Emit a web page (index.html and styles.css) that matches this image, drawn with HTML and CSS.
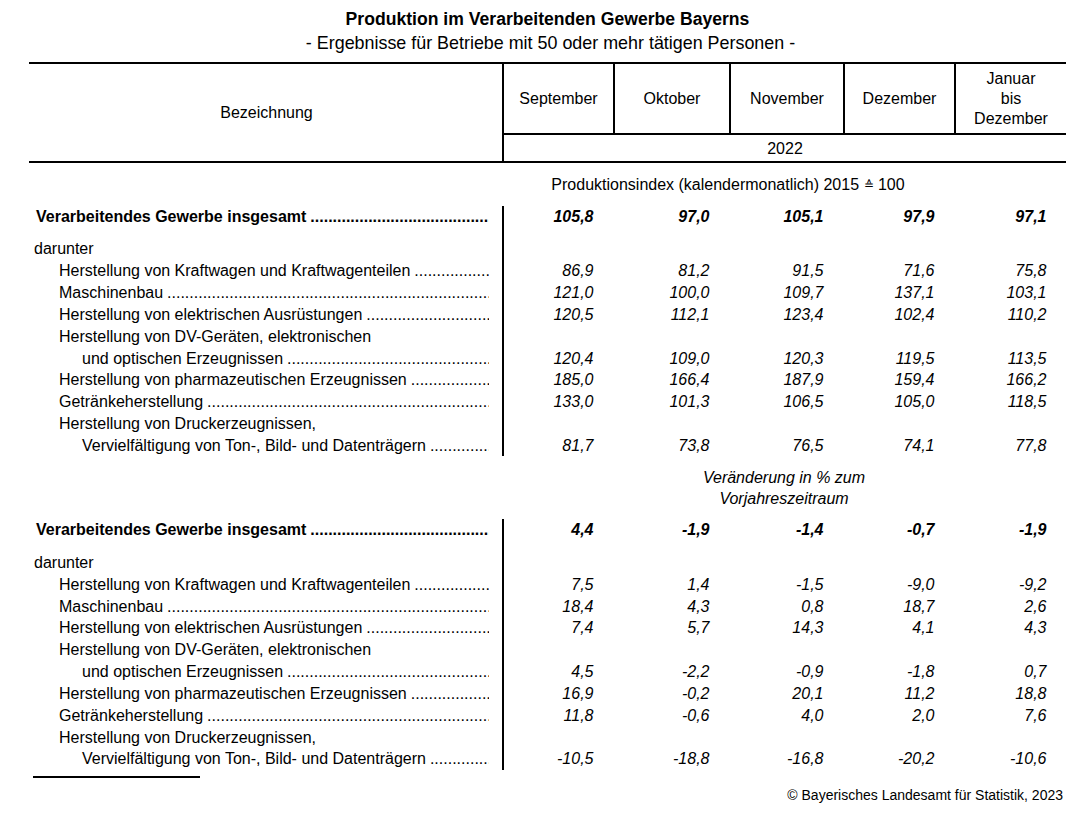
FILE: index.html
```html
<!DOCTYPE html>
<html lang="de">
<head>
<meta charset="utf-8">
<title>Produktion im Verarbeitenden Gewerbe Bayerns</title>
<link rel="stylesheet" href="styles.css">
</head>
<body>
<div class="page">
  <header class="titles">
    <div class="title">Produktion im Verarbeitenden Gewerbe Bayerns</div>
    <div class="subtitle">- Ergebnisse für Betriebe mit 50 oder mehr tätigen Personen -</div>
  </header>

  <table class="tbl">
    <colgroup>
      <col class="c-lbl"><col class="c-1"><col class="c-2"><col class="c-3"><col class="c-4"><col class="c-5">
    </colgroup>
    <thead>
      <tr class="hr1">
        <th class="h-lbl" rowspan="2">Bezeichnung</th>
        <th class="h-m">September</th>
        <th class="h-m">Oktober</th>
        <th class="h-m">November</th>
        <th class="h-m">Dezember</th>
        <th class="h-m h-multi">Januar<br>bis<br>Dezember</th>
      </tr>
      <tr class="hr2">
        <th class="h-yr" colspan="5">2022</th>
      </tr>
    </thead>
    <tbody>
      <tr class="sec">
        <td></td>
        <td class="sec-txt" colspan="4">Produktionsindex (kalendermonatlich) 2015 <span class="corr">≙</span> 100</td>
        <td></td>
      </tr>
      <tr class="tot">
        <td class="lbl lv0 b"><div class="li"><span class="t">Verarbeitendes Gewerbe insgesamt</span><span class="dots"></span></div></td>
        <td class="n n1 bi">105,8</td><td class="n bi">97,0</td><td class="n bi">105,1</td><td class="n bi">97,9</td><td class="n bi">97,1</td>
      </tr>
      <tr class="gap"><td></td><td class="n1"></td><td></td><td></td><td></td><td></td></tr>
      <tr class="r">
        <td class="lbl lvd"><div class="li"><span class="t">darunter</span></div></td>
        <td class="n n1"></td><td class="n"></td><td class="n"></td><td class="n"></td><td class="n"></td>
      </tr>
      <tr class="r">
        <td class="lbl lv1"><div class="li"><span class="t">Herstellung von Kraftwagen und Kraftwagenteilen</span><span class="dots"></span></div></td>
        <td class="n n1">86,9</td><td class="n">81,2</td><td class="n">91,5</td><td class="n">71,6</td><td class="n">75,8</td>
      </tr>
      <tr class="r">
        <td class="lbl lv1"><div class="li"><span class="t">Maschinenbau</span><span class="dots"></span></div></td>
        <td class="n n1">121,0</td><td class="n">100,0</td><td class="n">109,7</td><td class="n">137,1</td><td class="n">103,1</td>
      </tr>
      <tr class="r">
        <td class="lbl lv1"><div class="li"><span class="t">Herstellung von elektrischen Ausrüstungen</span><span class="dots"></span></div></td>
        <td class="n n1">120,5</td><td class="n">112,1</td><td class="n">123,4</td><td class="n">102,4</td><td class="n">110,2</td>
      </tr>
      <tr class="r">
        <td class="lbl lv1"><div class="li"><span class="t">Herstellung von DV-Geräten, elektronischen</span></div></td>
        <td class="n n1"></td><td class="n"></td><td class="n"></td><td class="n"></td><td class="n"></td>
      </tr>
      <tr class="r">
        <td class="lbl lv2"><div class="li"><span class="t">und optischen Erzeugnissen</span><span class="dots"></span></div></td>
        <td class="n n1">120,4</td><td class="n">109,0</td><td class="n">120,3</td><td class="n">119,5</td><td class="n">113,5</td>
      </tr>
      <tr class="r">
        <td class="lbl lv1"><div class="li"><span class="t">Herstellung von pharmazeutischen Erzeugnissen</span><span class="dots"></span></div></td>
        <td class="n n1">185,0</td><td class="n">166,4</td><td class="n">187,9</td><td class="n">159,4</td><td class="n">166,2</td>
      </tr>
      <tr class="r">
        <td class="lbl lv1"><div class="li"><span class="t">Getränkeherstellung</span><span class="dots"></span></div></td>
        <td class="n n1">133,0</td><td class="n">101,3</td><td class="n">106,5</td><td class="n">105,0</td><td class="n">118,5</td>
      </tr>
      <tr class="r">
        <td class="lbl lv1"><div class="li"><span class="t">Herstellung von Druckerzeugnissen,</span></div></td>
        <td class="n n1"></td><td class="n"></td><td class="n"></td><td class="n"></td><td class="n"></td>
      </tr>
      <tr class="r">
        <td class="lbl lv2"><div class="li"><span class="t">Vervielfältigung von Ton-, Bild- und Datenträgern</span><span class="dots"></span></div></td>
        <td class="n n1">81,7</td><td class="n">73,8</td><td class="n">76,5</td><td class="n">74,1</td><td class="n">77,8</td>
      </tr>

      <tr class="sec2">
        <td></td>
        <td class="sec-txt it" colspan="5">Veränderung in % zum<br>Vorjahreszeitraum</td>
      </tr>
      <tr class="tot">
        <td class="lbl lv0 b"><div class="li"><span class="t">Verarbeitendes Gewerbe insgesamt</span><span class="dots"></span></div></td>
        <td class="n n1 bi">4,4</td><td class="n bi">-1,9</td><td class="n bi">-1,4</td><td class="n bi">-0,7</td><td class="n bi">-1,9</td>
      </tr>
      <tr class="gap"><td></td><td class="n1"></td><td></td><td></td><td></td><td></td></tr>
      <tr class="r">
        <td class="lbl lvd"><div class="li"><span class="t">darunter</span></div></td>
        <td class="n n1"></td><td class="n"></td><td class="n"></td><td class="n"></td><td class="n"></td>
      </tr>
      <tr class="r">
        <td class="lbl lv1"><div class="li"><span class="t">Herstellung von Kraftwagen und Kraftwagenteilen</span><span class="dots"></span></div></td>
        <td class="n n1">7,5</td><td class="n">1,4</td><td class="n">-1,5</td><td class="n">-9,0</td><td class="n">-9,2</td>
      </tr>
      <tr class="r">
        <td class="lbl lv1"><div class="li"><span class="t">Maschinenbau</span><span class="dots"></span></div></td>
        <td class="n n1">18,4</td><td class="n">4,3</td><td class="n">0,8</td><td class="n">18,7</td><td class="n">2,6</td>
      </tr>
      <tr class="r">
        <td class="lbl lv1"><div class="li"><span class="t">Herstellung von elektrischen Ausrüstungen</span><span class="dots"></span></div></td>
        <td class="n n1">7,4</td><td class="n">5,7</td><td class="n">14,3</td><td class="n">4,1</td><td class="n">4,3</td>
      </tr>
      <tr class="r">
        <td class="lbl lv1"><div class="li"><span class="t">Herstellung von DV-Geräten, elektronischen</span></div></td>
        <td class="n n1"></td><td class="n"></td><td class="n"></td><td class="n"></td><td class="n"></td>
      </tr>
      <tr class="r">
        <td class="lbl lv2"><div class="li"><span class="t">und optischen Erzeugnissen</span><span class="dots"></span></div></td>
        <td class="n n1">4,5</td><td class="n">-2,2</td><td class="n">-0,9</td><td class="n">-1,8</td><td class="n">0,7</td>
      </tr>
      <tr class="r">
        <td class="lbl lv1"><div class="li"><span class="t">Herstellung von pharmazeutischen Erzeugnissen</span><span class="dots"></span></div></td>
        <td class="n n1">16,9</td><td class="n">-0,2</td><td class="n">20,1</td><td class="n">11,2</td><td class="n">18,8</td>
      </tr>
      <tr class="r">
        <td class="lbl lv1"><div class="li"><span class="t">Getränkeherstellung</span><span class="dots"></span></div></td>
        <td class="n n1">11,8</td><td class="n">-0,6</td><td class="n">4,0</td><td class="n">2,0</td><td class="n">7,6</td>
      </tr>
      <tr class="r">
        <td class="lbl lv1"><div class="li"><span class="t">Herstellung von Druckerzeugnissen,</span></div></td>
        <td class="n n1"></td><td class="n"></td><td class="n"></td><td class="n"></td><td class="n"></td>
      </tr>
      <tr class="r">
        <td class="lbl lv2"><div class="li"><span class="t">Vervielfältigung von Ton-, Bild- und Datenträgern</span><span class="dots"></span></div></td>
        <td class="n n1">-10,5</td><td class="n">-18,8</td><td class="n">-16,8</td><td class="n">-20,2</td><td class="n">-10,6</td>
      </tr>
    </tbody>
  </table>

  <div class="foot-rule"></div>
  <div class="copy">© Bayerisches Landesamt für Statistik, 2023</div>
</div>
</body>
</html>
```

FILE: styles.css
```css
* { box-sizing: border-box; }

html, body {
  margin: 0;
  padding: 0;
  background: #ffffff;
}

body {
  font-family: "Liberation Sans", Arial, sans-serif;
  font-size: 16px;
  color: #000000;
}

.page {
  width: 1082px;
  padding-top: 7px;
}

.titles {
  width: 1037px;
  margin-left: 29px;
  text-align: center;
  line-height: 24px;
}

.title {
  font-weight: bold;
  font-size: 17.6px;
}

.subtitle {
  font-size: 17.9px;
  padding-left: 6px;
}

.tbl {
  margin-left: 29px;
  margin-top: 7px;
  width: 1037px;
  table-layout: fixed;
  border-collapse: separate;
  border-spacing: 0;
  font-size: 16px;
}

.c-lbl { width: 473px; }
.c-1 { width: 111px; }
.c-2 { width: 116px; }
.c-3 { width: 114px; }
.c-4 { width: 111px; }
.c-5 { width: 112px; }

th, td {
  padding: 0;
  font-weight: normal;
}

.hr1 { height: 73px; }
.hr2 { height: 28px; }

.h-lbl {
  border-top: 2px solid #000;
  border-bottom: 2px solid #000;
  text-align: center;
  vertical-align: middle;
  padding-left: 2px;
}

.h-m {
  border-top: 2px solid #000;
  border-left: 2px solid #000;
  border-bottom: 2px solid #000;
  text-align: center;
  vertical-align: middle;
}

.h-multi { line-height: 20px; }

.h-yr {
  border-left: 2px solid #000;
  border-bottom: 2px solid #000;
  text-align: center;
  vertical-align: middle;
  padding-top: 1px;
}

.sec { height: 43px; }
.sec2 { height: 63px; }

.sec-txt {
  text-align: center;
  vertical-align: middle;
  line-height: 21px;
  padding-top: 1px;
}

.corr {
  font-size: 12px;
  vertical-align: 1px;
}

.it { font-style: italic; }

.tot { height: 21px; }
.gap { height: 11px; }
.r { height: 21.85px; }

.tot td, .r td {
  line-height: 18px;
  vertical-align: middle;
  white-space: nowrap;
  padding-top: 1px;
}

.lbl {
  padding-right: 13px;
  overflow: hidden;
}

.li {
  display: flex;
  align-items: baseline;
}

.li .t { flex: none; }

.li .dots {
  flex: 1;
  min-width: 0;
  overflow: hidden;
  white-space: nowrap;
  margin-left: 4px;
}

.li .dots::after {
  content: "........................................................................................................................................................";
}

.lv0 { padding-left: 7px; }
.lvd { padding-left: 5px; }
.lv1 { padding-left: 30px; }
.lv2 { padding-left: 53px; }

.b { font-weight: bold; }

.n {
  text-align: right;
  padding-right: 19.5px;
  font-style: italic;
}

.bi { font-weight: bold; font-style: italic; }

.n1 { border-left: 2px solid #000; }

.foot-rule {
  width: 167px;
  height: 2px;
  margin-left: 33px;
  margin-top: 6px;
  background: #000;
}

.copy {
  width: 1063px;
  text-align: right;
  font-size: 14px;
  line-height: 16px;
  margin-top: 9px;
}
```
